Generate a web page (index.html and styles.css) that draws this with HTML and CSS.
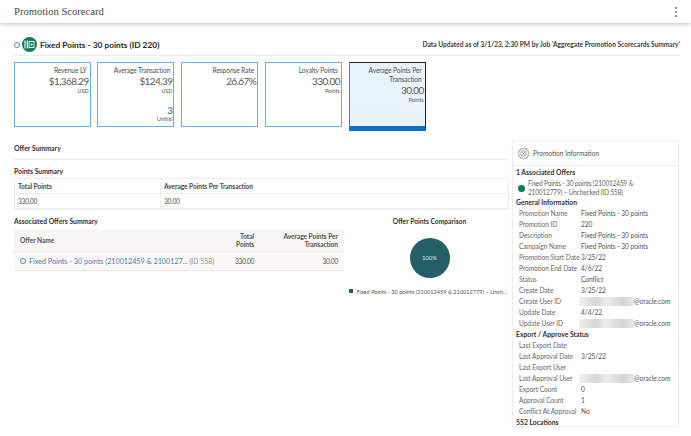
FILE: index.html
```html
<!DOCTYPE html>
<html lang="en">
<head>
<meta charset="utf-8">
<title>Promotion Scorecard</title>
<link rel="stylesheet" href="styles.css">
</head>
<body>
<header class="topbar">
  <h1 class="app-title">Promotion Scorecard</h1>
  <svg class="kebab" width="4" height="12" viewBox="0 0 4 12"><circle cx="2" cy="2" r="1.1"/><circle cx="2" cy="6" r="1.1"/><circle cx="2" cy="10" r="1.1"/></svg>
</header>
<main class="page">
  <div class="promo-head">
    <div class="promo-name">
      <span class="ring"></span>
      <span class="promo-badge">
        <svg width="11" height="9" viewBox="0 0 12 10"><path d="M1 .5v9M3.5.5v9" stroke="#fff" stroke-width="1.2" fill="none"/><rect x="5.5" y="1.5" width="5.5" height="7" fill="none" stroke="#fff" stroke-width="1"/><rect x="7.3" y="4" width="2" height="2" fill="#fff"/></svg>
      </span>
      <span class="promo-text">Fixed Points - 30 points (ID 220)</span>
    </div>
    <div class="updated">Data Updated as of 3/1/23, 2:30 PM by Job 'Aggregate Promotion Scorecards Summary'</div>
  </div>
  <section class="cards">
    <div class="card"><div class="c-label">Revenue LY</div><div class="c-value">$1,368.29</div><div class="c-unit">USD</div></div>
    <div class="card"><div class="c-label">Average Transaction</div><div class="c-value">$124.39</div><div class="c-unit">USD</div><div class="c-value c-second">3</div><div class="c-unit">Unit(s)</div></div>
    <div class="card"><div class="c-label">Response Rate</div><div class="c-value">26.67%</div></div>
    <div class="card"><div class="c-label">Loyalty Points</div><div class="c-value">330.00</div><div class="c-unit">Points</div></div>
    <div class="card card-selected"><div class="c-label">Average Points Per Transaction</div><div class="c-value">30.00</div><div class="c-unit">Points</div></div>
  </section>
  <div class="columns">
    <div class="left">
      <h2 class="offer-title">Offer Summary</h2>
      <h3 class="sub points-title">Points Summary</h3>
      <table class="points">
        <tr><th class="col-a">Total Points</th><th>Average Points Per Transaction</th></tr>
        <tr><td>330.00</td><td>30.00</td></tr>
      </table>
      <div class="lower">
        <div class="assoc">
          <h3 class="sub assoc-title">Associated Offers Summary</h3>
          <table class="offers">
            <tr><th class="o-name">Offer Name</th><th class="o-total">Total<br>Points</th><th class="o-avg">Average Points Per<br>Transaction</th></tr>
            <tr><td class="o-name"><span class="ring ring-small"></span><span class="o-link">Fixed Points - 30 points (210012459 &amp; 2100127...</span> <span class="o-id">(ID 558)</span></td><td class="o-total">330.00</td><td class="o-avg">30.00</td></tr>
          </table>
        </div>
        <div class="chart">
          <h3 class="sub chart-title">Offer Points Comparison</h3>
          <div class="pie">100%</div>
          <div class="legend"><span class="swatch"></span>Fixed Points - 30 points (210012459 &amp; 210012779) – Unch...</div>
        </div>
      </div>
    </div>
    <aside class="info">
      <div class="info-head">
        <svg width="13" height="13" viewBox="0 0 15 15" fill="none" stroke="#777" stroke-width=".8"><path d="M7.5 1l1.3 1.4 1.9-.4.6 1.8 1.8.6-.4 1.9L14 7.5l-1.3 1.3.4 1.9-1.8.6-.6 1.8-1.9-.4L7.5 14l-1.3-1.3-1.9.4-.6-1.8-1.8-.6.4-1.9L1 7.5l1.3-1.2-.4-1.9 1.8-.6.6-1.8 1.9.4z"/><circle cx="7.5" cy="7.5" r="3.2"/><path d="M6 6l3 3M9 6L6 9"/></svg>
        <span>Promotion Information</span>
      </div>
      <div class="info-body">
        <h4>1 Associated Offers</h4>
        <div class="assoc-item"><span class="dot"></span><span class="assoc-text">Fixed Points - 30 points (210012459 &amp; 210012779) – Unchecked (ID 558)</span></div>
        <h4>General Information</h4>
        <dl>
          <div><dt>Promotion Name</dt><dd>Fixed Points - 30 points</dd></div>
          <div><dt>Promotion ID</dt><dd>220</dd></div>
          <div><dt>Description</dt><dd>Fixed Points - 30 points</dd></div>
          <div><dt>Campaign Name</dt><dd>Fixed Points - 30 points</dd></div>
          <div><dt>Promotion Start Date</dt><dd>3/25/22</dd></div>
          <div><dt>Promotion End Date</dt><dd>4/6/22</dd></div>
          <div><dt>Status</dt><dd>Conflict</dd></div>
          <div><dt>Create Date</dt><dd>3/25/22</dd></div>
          <div><dt>Create User ID</dt><dd class="mail"><span class="blur"></span>@oracle.com</dd></div>
          <div><dt>Update Date</dt><dd>4/4/22</dd></div>
          <div><dt>Update User ID</dt><dd class="mail"><span class="blur"></span>@oracle.com</dd></div>
        </dl>
        <h4>Export / Approve Status</h4>
        <dl>
          <div><dt>Last Export Date</dt><dd></dd></div>
          <div><dt>Last Approval Date</dt><dd>3/25/22</dd></div>
          <div><dt>Last Export User</dt><dd></dd></div>
          <div><dt>Last Approval User</dt><dd class="mail"><span class="blur"></span>@oracle.com</dd></div>
          <div><dt>Export Count</dt><dd>0</dd></div>
          <div><dt>Approval Count</dt><dd>1</dd></div>
          <div><dt>Conflict At Approval</dt><dd>No</dd></div>
        </dl>
        <h4>552 Locations</h4>
      </div>
    </aside>
  </div>
</main>
</body>
</html>
```
FILE: styles.css
```css
* { box-sizing: border-box; }
html, body { margin: 0; height: 100%; overflow: hidden; }
body { background: #fff; color: #3a3835; font-family: "Lato", "Noto Sans", sans-serif; font-size: 6.6px; width: 691px; height: 436px; }
h1, h2, h3, h4, dl, dd { margin: 0; }
.topbar { height: 23px; padding: 0 13px 0 14px; display: flex; align-items: center; justify-content: space-between; box-shadow: 0 1px 4px rgba(0,0,0,.25); }
.app-title { font-family: "Liberation Serif", serif; font-weight: 400; font-size: 10.6px; color: #4a4844; }
.kebab { fill: #7d7a76; }
.page { padding: 0 11px 0 14px; }
.promo-head { height: 33px; padding-top: 14px; border-bottom: 1px solid #eeedeb; display: flex; justify-content: space-between; align-items: flex-start; }
.promo-name { display: flex; align-items: center; height: 15px; }
.ring { display: inline-block; width: 6px; height: 6px; border-radius: 50%; border: 1px solid #3f8fc0; }
.promo-badge { width: 15px; height: 15px; margin-left: 2px; border-radius: 50%; background: #14775f; display: flex; align-items: center; justify-content: center; }
.promo-text { margin-left: 3px; font-size: 8.35px; font-weight: 700; color: #2a2825; }
.updated { font-size: 6.6px; font-weight: 700; color: #3d3b38; line-height: 15px; }
.cards { display: flex; gap: 6.75px; margin-left: -.4px; padding-top: 6px; height: 76px; }
.card { width: 77px; height: 65px; border: 1px solid #6eaee0; padding: 3px 1px 0 0; text-align: right; }
.c-label { font-size: 6.6px; letter-spacing: -.08px; line-height: 9px; color: #4f4d49; padding-right: 2px; }
.c-value { font-size: 10px; letter-spacing: -.6px; line-height: 13px; color: #595754; }
.c-unit { font-size: 5.5px; line-height: 6px; color: #55534f; }
.c-second { margin-top: 11px; line-height: 11px; }
.card-selected { height: 69px; background: #e8f2fb; border: 1px solid #222; border-left-color: #777; border-bottom: 5px solid #0b6fc4; border-radius: 1px; }
.columns { display: flex; justify-content: space-between; padding-top: 2px; }
.left { width: 495px; }
.offer-title { height: 26px; padding-top: 10px; border-bottom: 1px solid #efeeec; font-size: 6.9px; font-weight: 700; line-height: 9px; color: #33312e; }
.sub { font-size: 6.8px; font-weight: 700; line-height: 9px; color: #33312e; }
.points-title { margin-top: 7px; }
table { border-collapse: collapse; font-size: 6.6px; letter-spacing: -.05px; }
.points { width: 100%; margin-top: 2px; border: 1px solid #eeedeb; border-bottom-width: 2px; }
.points th { text-align: left; font-weight: 700; height: 15px; padding: 0 3px; border-bottom: 1px solid #eeedeb; color: #4a4844; }
.points td { height: 15px; padding: 0 3px; color: #55534f; letter-spacing: -.25px; }
.points th.col-a, .points td:first-child { width: 146px; border-right: 1px solid #eeedeb; }
.lower { display: flex; margin-top: 7px; }
.assoc { flex: none; width: 330px; }
.offers { width: 100%; margin-top: 3px; }
.offers th { background: #f8f7f5; font-weight: 700; height: 23px; line-height: 8px; border-bottom: 1px solid #e8e7e5; color: #55534f; }
.offers td { background: #faf9f8; height: 19px; border-bottom: 1px solid #e8e7e5; color: #55534f; letter-spacing: -.25px; }
.o-name { text-align: left; padding-left: 6px; white-space: nowrap; }
.o-total { text-align: right; width: 40px; }
.o-avg { text-align: right; width: 89px; padding-right: 6px; }
.ring-small { margin-right: 3px; vertical-align: -0.5px; }
.offers .o-link { color: #3a84ab; font-size: 7.2px; letter-spacing: 0; }
.offers .o-id { color: #8b8986; font-size: 7px; letter-spacing: 0; }
.chart { flex: 1; min-width: 0; padding-left: 6px; display: flex; flex-direction: column; align-items: center; }
.chart-title { font-size: 6.7px; }
.pie { width: 40px; height: 40px; margin-top: 12px; border-radius: 50%; background: #255f66; color: #dfe9ea; font-size: 6px; display: flex; align-items: center; justify-content: center; }
.legend { margin: 10px 3px 0 0; font-size: 5.6px; color: #55534f; white-space: nowrap; display: flex; align-items: center; }
.swatch { width: 4.5px; height: 4.5px; background: #255f66; margin-right: 3px; }
.info { width: 167px; height: 287px; margin-top: 6px; margin-right: 1px; border: 1px solid #efeeec; box-shadow: 0 0 1px rgba(0,0,0,.06); }
.info-head { height: 25px; padding-left: 4px; border-bottom: 1px solid #e6edf1; display: flex; align-items: center; gap: 3px; font-size: 6.6px; color: #55534f; }
.info-body { padding: 1px 3px 0 3px; }
.info-body h4 { font-size: 6.8px; font-weight: 700; line-height: 11px; color: #33312e; }
.assoc-item { display: flex; align-items: center; padding: 1px 0 0 2px; font-size: 6.6px; letter-spacing: -.2px; line-height: 9px; color: #6a6865; }
.assoc-text { max-width: 118px; }
.dot { flex: none; width: 7px; height: 7px; margin-right: 3px; border-radius: 50%; background: #14775f; }
dl > div { display: flex; height: 11px; line-height: 11px; padding-left: 3px; font-size: 6.6px; letter-spacing: -.05px; color: #6a6865; }
dt { width: 62px; flex: none; white-space: nowrap; }
dd { color: #55534f; font-size: 6.6px; white-space: nowrap; }
.mail { display: flex; flex: 1; justify-content: flex-end; padding-right: 6px; }
.blur { width: 55px; height: 9px; margin-top: 1px; margin-left: -2px; flex: none; background: linear-gradient(90deg, #f0f0ee, #d6d6d4 30%, #eeeeec 50%, #d4d4d2 80%, #e8e8e6); }
```
